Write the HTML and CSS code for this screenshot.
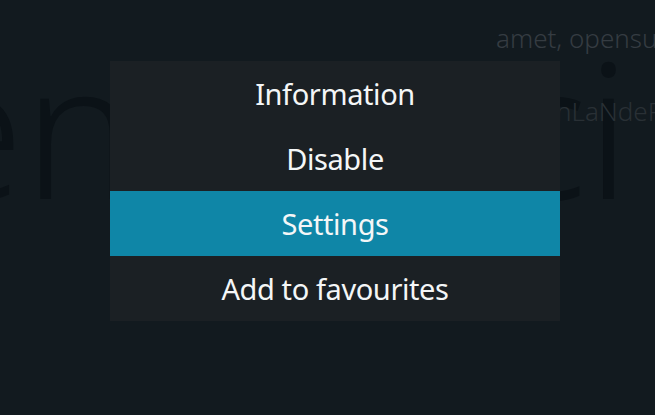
FILE: index.html
```html
<!DOCTYPE html>
<html lang="en">
<head>
  <meta charset="UTF-8" />
  <meta name="viewport" content="width=device-width, initial-scale=1.0"/>
  <title>Add-on</title>
  <link rel="stylesheet" href="styles.css">
</head>
<body>
  <!-- dimmed add-on info page behind the context menu -->
  <div class="backdrop">
    <div class="big-word big-left">en</div>
    <div class="big-word big-right">ci</div>
    <div class="blurb blurb-top">amet, opensuse</div>
    <div class="blurb blurb-mid">nLaNdePro</div>
  </div>

  <!-- context menu -->
  <div class="overlay">
    <ul class="menu">
      <li class="menu-item">Information</li>
      <li class="menu-item">Disable</li>
      <li class="menu-item focused">Settings</li>
      <li class="menu-item">Add to favourites</li>
    </ul>
  </div>
</body>
</html>
```

FILE: styles.css
```css
/* Estuary-like dark skin */
html, body { height: 100%; }
body {
  margin: 0;
  overflow: hidden;
  background: #121a1f;
  font-family: "Noto Sans", "Open Sans", sans-serif;
  color: #fff;
}

.backdrop { position: absolute; inset: 0; overflow: hidden; }
.big-word {
  position: absolute;
  font-size: 188px;
  font-weight: 300;
  line-height: 1;
  color: #0b1217;
}
.big-left { left: -80px; top: 32px; }
.big-right { left: 497px; top: 32px; }
.blurb {
  position: absolute;
  font-size: 26px;
  font-weight: 300;
  white-space: nowrap;
}
.blurb-top { left: 496px; top: 20px; color: #353c42; }
.blurb-mid { left: 556px; top: 93px; color: #293035; }

.overlay {
  position: absolute;
  inset: 0;
  padding: 61px 0 0 110px;
}
.menu {
  list-style: none;
  margin: 0;
  padding: 0;
  width: 450px;
  background: #1b2024;
}
.menu-item {
  height: 65px;
  line-height: 65px;
  text-align: center;
  font-size: 29px;
  letter-spacing: -0.4px;
  color: #f4f6f7;
}
.menu-item.focused { background: #0f86a7; }
```
